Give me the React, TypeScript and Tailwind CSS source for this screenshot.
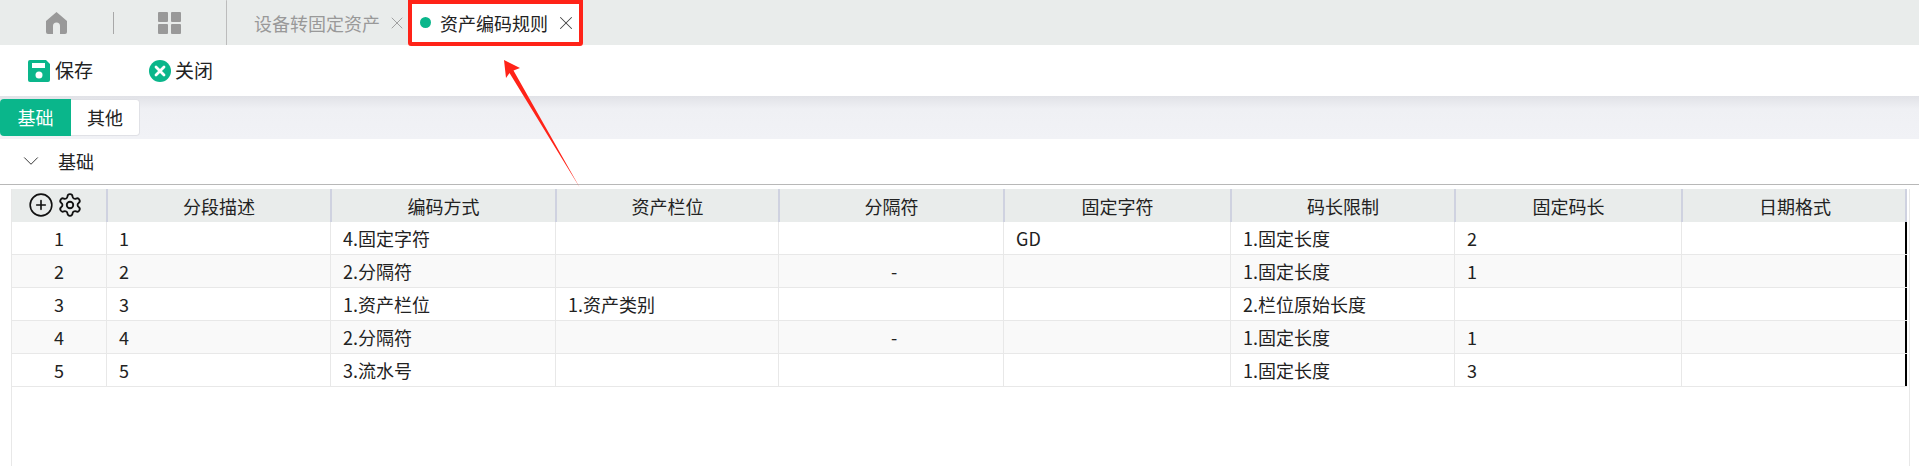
import React from "react";
import { ChevronDown, CirclePlus, Settings, X } from "lucide-react";

const gridCols =
  "grid w-[1895px] grid-cols-[94px_224px_225px_223px_225px_227px_224px_227px_226px]";

const headers = ["分段描述", "编码方式", "资产栏位", "分隔符", "固定字符", "码长限制", "固定码长", "日期格式"];

const rows = [
  ["1", "1", "4.固定字符", "", "", "GD", "1.固定长度", "2", ""],
  ["2", "2", "2.分隔符", "", "-", "", "1.固定长度", "1", ""],
  ["3", "3", "1.资产栏位", "1.资产类别", "", "", "2.栏位原始长度", "", ""],
  ["4", "4", "2.分隔符", "", "-", "", "1.固定长度", "1", ""],
  ["5", "5", "3.流水号", "", "", "", "1.固定长度", "3", ""],
];

const HomeIcon = () => (
  <svg viewBox="0 0 21 22" className="w-[21px] h-[22px] fill-[#999999]">
    <path d="M10.5 0 L21 9 V20 a2 2 0 0 1 -2 2 H14 V14 a3.5 3.5 0 0 0 -7 0 V22 H2 a2 2 0 0 1 -2 -2 V9 Z" />
  </svg>
);

const GridIcon = () => (
  <svg viewBox="0 0 23 22" className="w-[23px] h-[22px] fill-[#999999]">
    <rect x="0" y="0" width="10" height="10" rx="1" />
    <rect x="13" y="0" width="10" height="10" rx="1" />
    <rect x="0" y="12" width="10" height="10" rx="1" />
    <rect x="13" y="12" width="10" height="10" rx="1" />
  </svg>
);

const SaveIcon = () => (
  <svg viewBox="0 0 22 22" className="w-[22px] h-[22px]">
    <path d="M2 0 H18 L22 4 V20 a2 2 0 0 1 -2 2 H2 a2 2 0 0 1 -2 -2 V2 a2 2 0 0 1 2 -2 Z" fill="#0ab68b" />
    <rect x="4" y="3" width="13" height="5" fill="#ffffff" />
    <circle cx="11" cy="15" r="3.5" fill="#ffffff" />
  </svg>
);

const CloseIcon = () => (
  <svg viewBox="0 0 22 22" className="w-[22px] h-[22px]">
    <circle cx="11" cy="11" r="11" fill="#0ab68b" />
    <path d="M7 7 L15 15 M15 7 L7 15" stroke="#ffffff" strokeWidth="2.8" strokeLinecap="round" />
  </svg>
);

export default function App() {
  return (
    <div className="relative h-[466px] overflow-hidden bg-white text-[18px] leading-[24px] text-[#222222] font-['Noto_Sans_CJK_SC','Noto_Sans',sans-serif]">
      {/* top tabs */}
      <div className="flex h-[45px] items-center bg-[#e9eceb]">
        <div className="flex w-[113px] justify-end pr-[46px]">
          <HomeIcon />
        </div>
        <div className="h-[22px] w-px bg-[#a8a8a8]" />
        <div className="flex w-[112px] justify-center pr-[2px]">
          <GridIcon />
        </div>
        <div className="h-[45px] w-px rounded-tl bg-[#bcbcbc]" />
        <div className="flex w-[181px] items-center pl-[27px] text-[#999999]">
          <span>设备转固定资产</span>
          <X size={20} strokeWidth={1.1} className="ml-[7px] shrink-0" />
        </div>
        <div className="flex h-[45px] w-[175px] items-center bg-white pl-[12px]">
          <span className="h-[11px] w-[11px] rounded-full bg-[#0ab68b]" />
          <span className="ml-[9px]">资产编码规则</span>
          <X size={22} strokeWidth={1.1} className="ml-[7px] shrink-0 text-[#444444]" />
        </div>
      </div>

      {/* toolbar */}
      <div className="flex h-[51px] items-center pl-[28px]">
        <div className="flex w-[121px] items-center gap-[5px]">
          <SaveIcon />
          <span className="pb-[1px] text-[19px]">保存</span>
        </div>
        <div className="flex items-center gap-[4px]">
          <CloseIcon />
          <span className="pb-[1px] text-[19px]">关闭</span>
        </div>
      </div>

      {/* form tabs */}
      <div className="flex h-[43px] items-center bg-gradient-to-b from-[#e1e2e7] via-[#eff0f4] via-30% to-[#f1f2f6]">
        <div className="flex h-[37px] w-[71px] items-center justify-center rounded-l bg-[#0ab68b] pb-[1px] text-white">基础</div>
        <div className="flex h-[37px] w-[69px] items-center justify-center rounded-r border border-l-0 border-[#e0e1e6] bg-white pb-[1px]">其他</div>
      </div>

      {/* section title */}
      <div className="flex h-[46px] items-center border-b border-[#b8b8b8] pb-[1px] pl-[18px]">
        <ChevronDown size={26} strokeWidth={0.9} className="text-[#333333]" />
        <span className="ml-[14px]">基础</span>
      </div>

      {/* table */}
      <div className="ml-[11px] mr-[9px] mt-[4px] h-[300px] border-x border-[#e8e8e8]">
        <div className={`${gridCols} h-[33px] bg-[#e9eceb]`}>
          <div className="flex items-center justify-center gap-[3px] pb-[2px] pr-[8px]">
            <CirclePlus size={26} strokeWidth={1.5} className="shrink-0 text-[#111111]" />
            <Settings size={26} strokeWidth={1.7} className="shrink-0 text-[#111111]" />
          </div>
          {headers.map((h, i) => (
            <div
              key={h}
              className={
                i === headers.length - 1
                  ? "flex items-center justify-center border-x-2 border-x-[#cfd2e0] pl-[2px]"
                  : "flex items-center justify-center border-l-2 border-[#cfd2e0]"
              }
            >
              {h}
            </div>
          ))}
        </div>
        {rows.map((row, i) => (
          <div key={row[0]} className={`${gridCols} h-[33px] border-b border-[#e8e8e8] ${i % 2 === 1 ? "bg-[#f9f9f9]" : "bg-white"}`}>
            {row.map((cell, j) => (
              <div
                key={j}
                className={
                  j === 0
                    ? "flex items-center justify-center"
                    : cell === "-"
                      ? "flex items-center justify-center border-l border-[#e8e8e8] pl-[6px]"
                      : j === 8
                        ? "flex items-center border-l border-r-2 border-l-[#e8e8e8] border-r-black"
                        : "flex items-center border-l border-[#e8e8e8] pl-[12px]"
                }
              >
                {cell}
              </div>
            ))}
          </div>
        ))}
      </div>

      {/* annotation: red box and arrow */}
      <div className="absolute left-[408px] top-0 h-[46px] w-[175px] rounded-b-[3px] border-[4px] border-[#ff2318]" />
      <svg className="absolute left-0 top-0 pointer-events-none" width="600" height="200">
        <polygon points="504,60 520,68 513.5,70.5 580,188 509.5,73 506,78" fill="#ff2318" />
      </svg>
    </div>
  );
}
